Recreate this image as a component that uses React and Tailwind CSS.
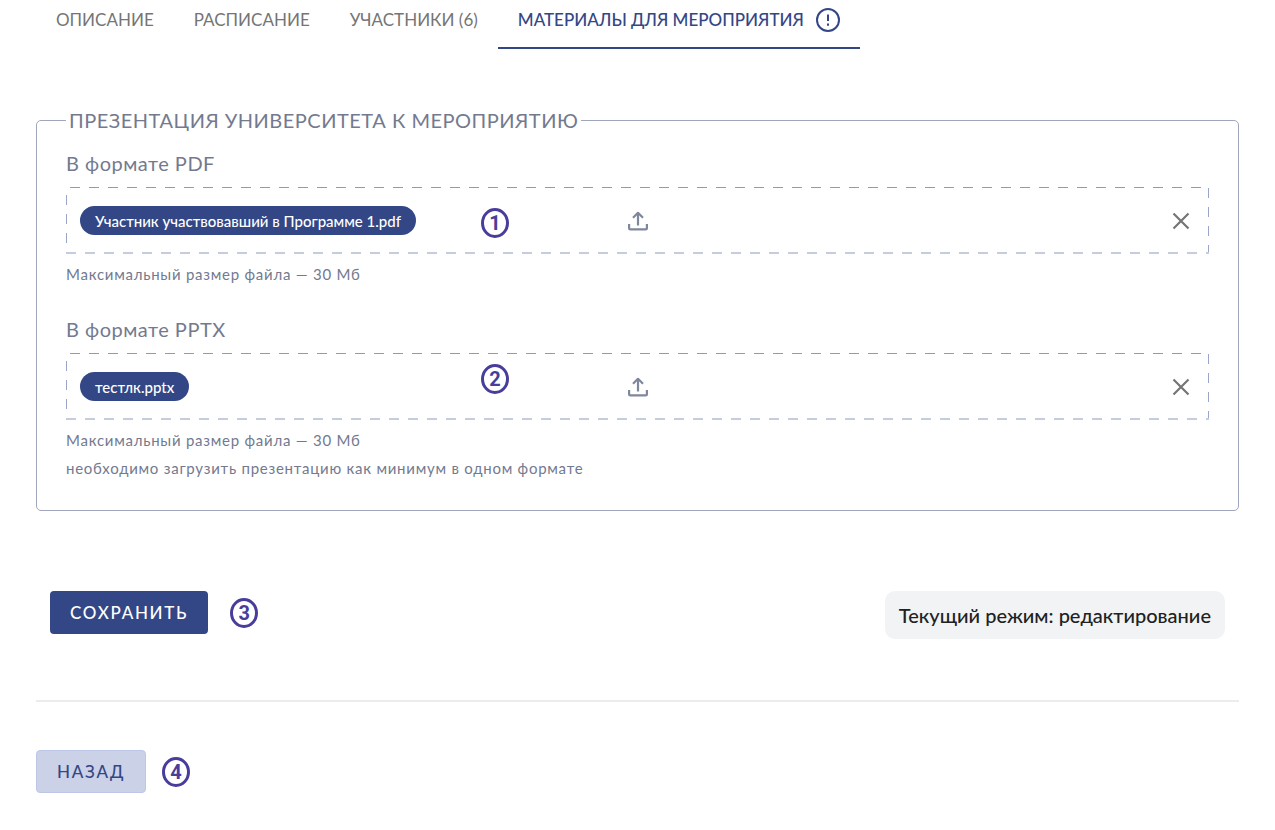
import { useState } from 'react'

const tabs = ['Описание', 'Расписание', 'Участники (6)', 'Материалы для мероприятия']

const dashedLines =
  'bg-[repeating-linear-gradient(90deg,transparent_0_4px,#8f99b9_4px_14px,transparent_14px_19px),repeating-linear-gradient(90deg,#c6cce0_0_10px,transparent_10px_19px),repeating-linear-gradient(180deg,transparent_0_8px,#9aa5c8_8px_18px,transparent_18px_19px),repeating-linear-gradient(180deg,transparent_0_1px,#9aa5c8_1px_11px,transparent_11px_19px)] bg-[size:100%_1px,100%_2px,1px_100%,1px_100%] bg-[position:0_0,0_100%,0_0,100%_0] bg-no-repeat'

function Marker({ n, className = '' }) {
  return (
    <span
      className={`flex h-[30px] w-7 shrink-0 items-center justify-center rounded-[50%] border-3 border-[#483d9b] font-[Roboto,sans-serif] text-xl leading-5 font-bold text-[#483d9b] ${className}`}
    >
      {n}
    </span>
  )
}

function InfoIcon() {
  return (
    <svg viewBox="0 0 24 24" className="h-6 w-6" fill="none" stroke="currentColor" strokeWidth="2" aria-hidden="true">
      <circle cx="12" cy="12" r="11" />
      <path d="M12 6.5v6.5" />
      <path d="M12 15.5v2.2" />
    </svg>
  )
}

function UploadIcon() {
  return (
    <svg
      viewBox="0 0 20 20"
      className="h-5 w-5"
      fill="none"
      stroke="currentColor"
      strokeWidth="2.2"
      strokeLinejoin="round"
      aria-hidden="true"
    >
      <path d="M10 14.5V2" />
      <path d="M5 6.8 10 1.8 15 6.8" />
      <path d="M1.1 13v4q0 1.4 1.4 1.4h15q1.4 0 1.4-1.4v-4" />
    </svg>
  )
}

function FileField({ label, file, markerClass, n }) {
  const [name, setName] = useState(file)

  return (
    <div>
      <h3 className="text-xl leading-6 tracking-wide">{label}</h3>
      <div className={`relative mt-3 grid h-[67px] grid-cols-[1fr_auto_1fr] items-center px-[14px] ${dashedLines}`}>
        <div>
          {name && (
            <span className="inline-flex h-[29px] items-center rounded-full bg-[#334786] px-[15px] text-[15px] leading-5 font-medium text-white">
              {name}
            </span>
          )}
        </div>
        <button type="button" aria-label="Загрузить файл" className="text-[#7f879c]">
          <UploadIcon />
        </button>
        <button
          type="button"
          aria-label="Удалить файл"
          onClick={() => setName('')}
          className="mr-[5px] justify-self-end text-[#757575]"
        >
          <svg viewBox="0 0 18 18" className="h-[18px] w-[18px]" fill="none" stroke="currentColor" strokeWidth="2.2" aria-hidden="true">
            <path d="M1.5 1.5 16.5 16.5M16.5 1.5 1.5 16.5" />
          </svg>
        </button>
        <Marker n={n} className={`absolute left-[415px] ${markerClass}`} />
      </div>
      <p className="mt-[10px] text-[15px] leading-5 tracking-wider">Максимальный размер файла — 30 Мб</p>
    </div>
  )
}

export default function App() {
  const [active, setActive] = useState(3)

  return (
    <main className="bg-white px-9 pb-9 font-[Lato,'Noto_Sans',sans-serif]">
      <nav className="flex">
        {tabs.map((t, i) => (
          <button
            key={t}
            type="button"
            onClick={() => setActive(i)}
            className={`flex items-center gap-3 border-b-2 px-5 pt-2 pb-[15px] text-[17px] leading-6 uppercase ${
              i === active ? 'border-[#334786] font-medium text-[#334786]' : 'border-transparent text-[#757575]'
            }`}
          >
            {t}
            {i === 3 && <InfoIcon />}
          </button>
        ))}
      </nav>

      <form onSubmit={(e) => e.preventDefault()}>
        <fieldset className="mt-[59px] rounded-[5px] border border-[#a0a6bc] px-[29px] pb-8 text-[#737a8f]">
          <legend className="px-[3px] text-xl leading-6 tracking-wide uppercase">
            Презентация университета к мероприятию
          </legend>
          <div className="space-y-[33px] pt-[19px]">
            <FileField label="В формате PDF" file="Участник участвовавший в Программе 1.pdf" n={1} markerClass="top-[21px]" />
            <FileField label="В формате PPTX" file="тестлк.pptx" n={2} markerClass="top-[11px]" />
          </div>
          <p className="mt-2 text-[15px] leading-5 tracking-wider">
            необходимо загрузить презентацию как минимум в одном формате
          </p>
        </fieldset>

        <div className="mt-20 flex items-start justify-between px-[14px]">
          <div className="flex items-center gap-[22px]">
            <button
              type="submit"
              className="h-[43px] rounded-[4px] bg-[#334786] px-5 text-[17px] leading-6 font-medium tracking-widest text-white uppercase"
            >
              Сохранить
            </button>
            <Marker n={3} />
          </div>
          <p className="rounded-[10px] bg-[#f1f3f5] px-[14px] py-3 text-xl leading-6 font-medium text-[#212121]">
            Текущий режим: редактирование
          </p>
        </div>
      </form>

      <hr className="mt-[61px] border-t-2 border-[#ececee]" />

      <div className="mt-12 flex items-center gap-4">
        <button
          type="button"
          className="h-[43px] rounded-[4px] border border-[#bcc6e6] bg-[#cbd1e7] px-5 text-[17px] leading-6 font-medium tracking-widest text-[#334786] uppercase"
        >
          Назад
        </button>
        <Marker n={4} />
      </div>
    </main>
  )
}
